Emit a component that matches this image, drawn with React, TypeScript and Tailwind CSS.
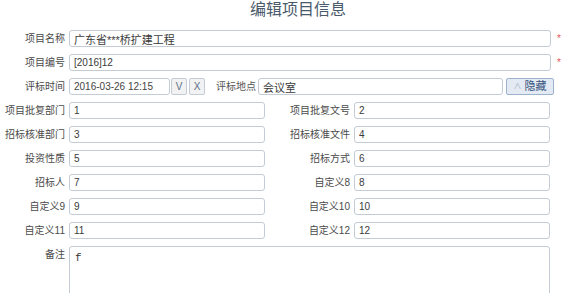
import React from 'react';

const font = "font-['Liberation_Sans','Noto_Sans_CJK_SC',sans-serif]";
const inputCls =
  'h-[17px] border border-[#c3ccd6] rounded-[3px] bg-white px-[4px] text-[10px] leading-[15px] text-[#3a3a3a] outline-none';

const Label: React.FC<{ text: string }> = ({ text }) => (
  <div className="w-[66px] shrink-0 pr-[1px] text-right text-[10px] leading-[17px] text-[#4a4a4a] whitespace-nowrap">
    {text}
  </div>
);

const Half: React.FC<{ label: string; value: string }> = ({ label, value }) => (
  <div className="flex items-center gap-[3px] w-[285px] shrink-0">
    <Label text={label} />
    <input className={`${inputCls} w-[196px]`} defaultValue={value} />
  </div>
);

const pairs: [string, string, string, string][] = [
  ['项目批复部门', '1', '项目批复文号', '2'],
  ['招标核准部门', '3', '招标核准文件', '4'],
  ['投资性质', '5', '招标方式', '6'],
  ['招标人', '7', '自定义8', '8'],
  ['自定义9', '9', '自定义10', '10'],
  ['自定义11', '11', '自定义12', '12'],
];

const App: React.FC = () => {
  return (
    <div className={`w-[568px] h-[293px] overflow-hidden bg-white ${font}`}>
      {/* Title */}
      <div className="h-[30px] text-center text-[16px] leading-[20px] text-[#4a5a6b] pl-[28px]">
        编辑项目信息
      </div>

      <div className="flex flex-col gap-[7px]">
        {/* Required rows */}
        <div className="flex items-center gap-[3px]">
          <Label text="项目名称" />
          <input className={`${inputCls} w-[482px] text-[11px]`} defaultValue="广东省***桥扩建工程" />
          <span className="ml-[3px] text-[10px] text-[#e05a5a]">*</span>
        </div>
        <div className="flex items-center gap-[3px]">
          <Label text="项目编号" />
          <input className={`${inputCls} w-[482px]`} defaultValue="[2016]12" />
          <span className="ml-[3px] text-[10px] text-[#e05a5a]">*</span>
        </div>

        {/* Time and place */}
        <div className="flex items-center h-[17px]">
          <Label text="评标时间" />
          <input
            className={`${inputCls} ml-[3px] w-[101px] bg-[#ececec] text-[#444]`}
            defaultValue="2016-03-26 12:15"
            readOnly
          />
          <button className="ml-[1px] h-[17px] w-[16px] shrink-0 border border-[#c3ccd6] rounded-[2px] bg-[#f2f2f2] text-[10px] leading-[15px] text-[#5b6f87]">
            V
          </button>
          <button className="ml-[2px] h-[17px] w-[16px] shrink-0 border border-[#c3ccd6] rounded-[2px] bg-[#f2f2f2] text-[10px] leading-[15px] text-[#5b6f87]">
            X
          </button>
          <div className="ml-[10px] w-[41px] shrink-0 whitespace-nowrap text-right text-[10px] leading-[17px] text-[#555]">
            评标地点
          </div>
          <input className={`${inputCls} ml-[2px] w-[245px] text-[11px]`} defaultValue="会议室" />
          <button className="ml-[3px] h-[17px] w-[48px] shrink-0 border border-[#9db3cc] rounded-[2px] bg-[#e3eaf3] text-[11px] leading-[15px] text-[#34507a] flex items-center justify-center gap-[3px]">
            <span className="text-[#a8b3c0] text-[8px]">∧</span>隐藏
          </button>
        </div>

        {pairs.map(([l1, v1, l2, v2]) => (
          <div key={l1} className="flex">
            <Half label={l1} value={v1} />
            <Half label={l2} value={v2} />
          </div>
        ))}

        {/* Remarks */}
        <div className="flex gap-[3px]">
          <Label text="备注" />
          <textarea
            className="h-[60px] w-[481px] resize-none border border-[#c3ccd6] rounded-[3px] px-[5px] py-[4px] font-['Liberation_Mono',monospace] text-[11px] leading-[14px] text-[#333] outline-none"
            defaultValue="f"
          />
        </div>
      </div>
    </div>
  );
};

export default App;
